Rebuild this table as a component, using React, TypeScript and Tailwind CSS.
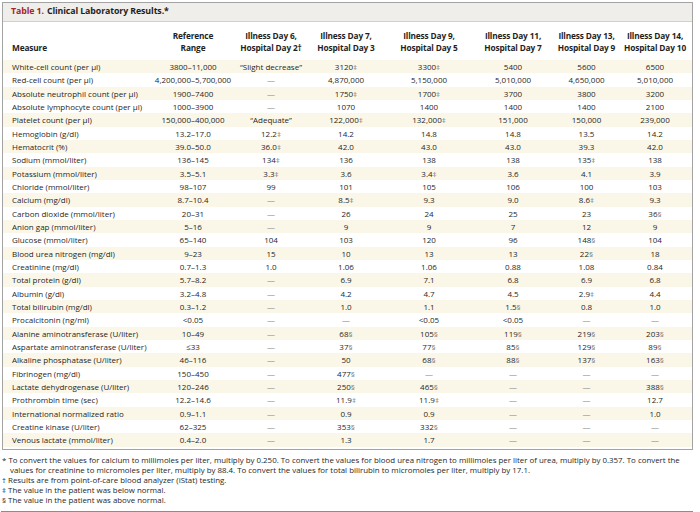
import React from "react";

const rows: string[][] = [
  ["White-cell count (per μl)", "3800–11,000", "“Slight decrease”", "3120‡", "3300‡", "5400", "5600", "6500"],
  ["Red-cell count (per μl)", "4,200,000–5,700,000", "—", "4,870,000", "5,150,000", "5,010,000", "4,650,000", "5,010,000"],
  ["Absolute neutrophil count (per μl)", "1900–7400", "—", "1750‡", "1700‡", "3700", "3800", "3200"],
  ["Absolute lymphocyte count (per μl)", "1000–3900", "—", "1070", "1400", "1400", "1400", "2100"],
  ["Platelet count (per μl)", "150,000–400,000", "“Adequate”", "122,000‡", "132,000‡", "151,000", "150,000", "239,000"],
  ["Hemoglobin (g/dl)", "13.2–17.0", "12.2‡", "14.2", "14.8", "14.8", "13.5", "14.2"],
  ["Hematocrit (%)", "39.0–50.0", "36.0‡", "42.0", "43.0", "43.0", "39.3", "42.0"],
  ["Sodium (mmol/liter)", "136–145", "134‡", "136", "138", "138", "135‡", "138"],
  ["Potassium (mmol/liter)", "3.5–5.1", "3.3‡", "3.6", "3.4‡", "3.6", "4.1", "3.9"],
  ["Chloride (mmol/liter)", "98–107", "99", "101", "105", "106", "100", "103"],
  ["Calcium (mg/dl)", "8.7–10.4", "—", "8.5‡", "9.3", "9.0", "8.6‡", "9.3"],
  ["Carbon dioxide (mmol/liter)", "20–31", "—", "26", "24", "25", "23", "36§"],
  ["Anion gap (mmol/liter)", "5–16", "—", "9", "9", "7", "12", "9"],
  ["Glucose (mmol/liter)", "65–140", "104", "103", "120", "96", "148§", "104"],
  ["Blood urea nitrogen (mg/dl)", "9–23", "15", "10", "13", "13", "22§", "18"],
  ["Creatinine (mg/dl)", "0.7–1.3", "1.0", "1.06", "1.06", "0.88", "1.08", "0.84"],
  ["Total protein (g/dl)", "5.7–8.2", "—", "6.9", "7.1", "6.8", "6.9", "6.8"],
  ["Albumin (g/dl)", "3.2–4.8", "—", "4.2", "4.7", "4.5", "2.9‡", "4.4"],
  ["Total bilirubin (mg/dl)", "0.3–1.2", "—", "1.0", "1.1", "1.5§", "0.8", "1.0"],
  ["Procalcitonin (ng/ml)", "<0.05", "—", "—", "<0.05", "<0.05", "—", "—"],
  ["Alanine aminotransferase (U/liter)", "10–49", "—", "68§", "105§", "119§", "219§", "203§"],
  ["Aspartate aminotransferase (U/liter)", "≤33", "—", "37§", "77§", "85§", "129§", "89§"],
  ["Alkaline phosphatase (U/liter)", "46–116", "—", "50", "68§", "88§", "137§", "163§"],
  ["Fibrinogen (mg/dl)", "150–450", "—", "477§", "—", "—", "—", "—"],
  ["Lactate dehydrogenase (U/liter)", "120–246", "—", "250§", "465§", "—", "—", "388§"],
  ["Prothrombin time (sec)", "12.2–14.6", "—", "11.9‡", "11.9‡", "—", "—", "12.7"],
  ["International normalized ratio", "0.9–1.1", "—", "0.9", "0.9", "—", "—", "1.0"],
  ["Creatine kinase (U/liter)", "62–325", "—", "353§", "332§", "—", "—", "—"],
  ["Venous lactate (mmol/liter)", "0.4–2.0", "—", "1.3", "1.7", "—", "—", "—"],
];

const headers: [string, string][] = [
  ["Reference", "Range"],
  ["Illness Day 6,", "Hospital Day 2†"],
  ["Illness Day 7,", "Hospital Day 3"],
  ["Illness Day 9,", "Hospital Day 5"],
  ["Illness Day 11,", "Hospital Day 7"],
  ["Illness Day 13,", "Hospital Day 9"],
  ["Illness Day 14,", "Hospital Day 10"],
];

function Cell({ v }: { v: string }) {
  if (v === "—") {
    return <span className="text-[#8a8a8a]">—</span>;
  }
  const last = v.slice(-1);
  if (last === "‡" || last === "§") {
    return (
      <span>
        {v.slice(0, -1)}
        <span className="text-[#777]">{last}</span>
      </span>
    );
  }
  return <span>{v}</span>;
}

export default function App() {
  return (
    <div
      className="w-[700px] h-[512px] bg-white text-[#1f1f1f] overflow-hidden"
      style={{ fontFamily: '"Open Sans", "Noto Sans", sans-serif' }}
    >
      <div className="ml-[2px] mt-[2px] w-[691px] border border-[#a3a3a3]">
        <div className="h-[19px] bg-[#efeeea] border-b border-[#cfcfcf] pl-[8px] flex items-center text-[8.8px] font-bold tracking-[-0.1px]">
          <span className="text-[#a3282e]">Table 1.</span>
          <span className="ml-[3px]">Clinical Laboratory Results.*</span>
        </div>
        <div className="grid grid-cols-[146px_88px_68px_82px_84px_84px_63px_74px] text-[8px]">
          <div className="h-[38px] flex items-end pl-[9px] pb-[6px] font-bold leading-[12px] text-[8.3px] tracking-[-0.15px]">Measure</div>
          {headers.map((h, i) => (
            <div
              key={i}
              className="h-[38px] flex flex-col justify-end items-center pb-[6px] font-bold leading-[12px] text-center text-[8.3px] tracking-[-0.15px] whitespace-nowrap"
            >
              <span>{h[0]}</span>
              <span>{h[1]}</span>
            </div>
          ))}
          {rows.map((r, ri) => {
            const bg = ri % 2 === 0 ? "bg-[#fbf7e8]" : "bg-white";
            return (
              <React.Fragment key={ri}>
                <div className={`h-[13.33px] leading-[13.33px] pl-[9px] whitespace-nowrap ${bg}`}>{r[0]}</div>
                {r.slice(1).map((v, ci) => (
                  <div key={ci} className={`h-[13.33px] leading-[13.33px] text-center whitespace-nowrap ${bg}`}>
                    <Cell v={v} />
                  </div>
                ))}
              </React.Fragment>
            );
          })}
        </div>
        <div className="h-[2px]" />
      </div>
      <div className="mt-[5px] ml-[2px] w-[691px] text-[7.9px] leading-[10px]">
        <div className="pl-[8px] -indent-[8px]">
          * To convert the values for calcium to millimoles per liter, multiply by 0.250. To convert the values for blood urea nitrogen to millimoles per liter of urea, multiply by 0.357. To convert the values for creatinine to micromoles per liter, multiply by 88.4. To convert the values for total bilirubin to micromoles per liter, multiply by 17.1.
        </div>
        <div>† Results are from point-of-care blood analyzer (iStat) testing.</div>
        <div>‡ The value in the patient was below normal.</div>
        <div>§ The value in the patient was above normal.</div>
      </div>
      <div className="mt-[6px] ml-[1px] w-[692px] h-[2px] bg-[#8c8c8c]" />
    </div>
  );
}
